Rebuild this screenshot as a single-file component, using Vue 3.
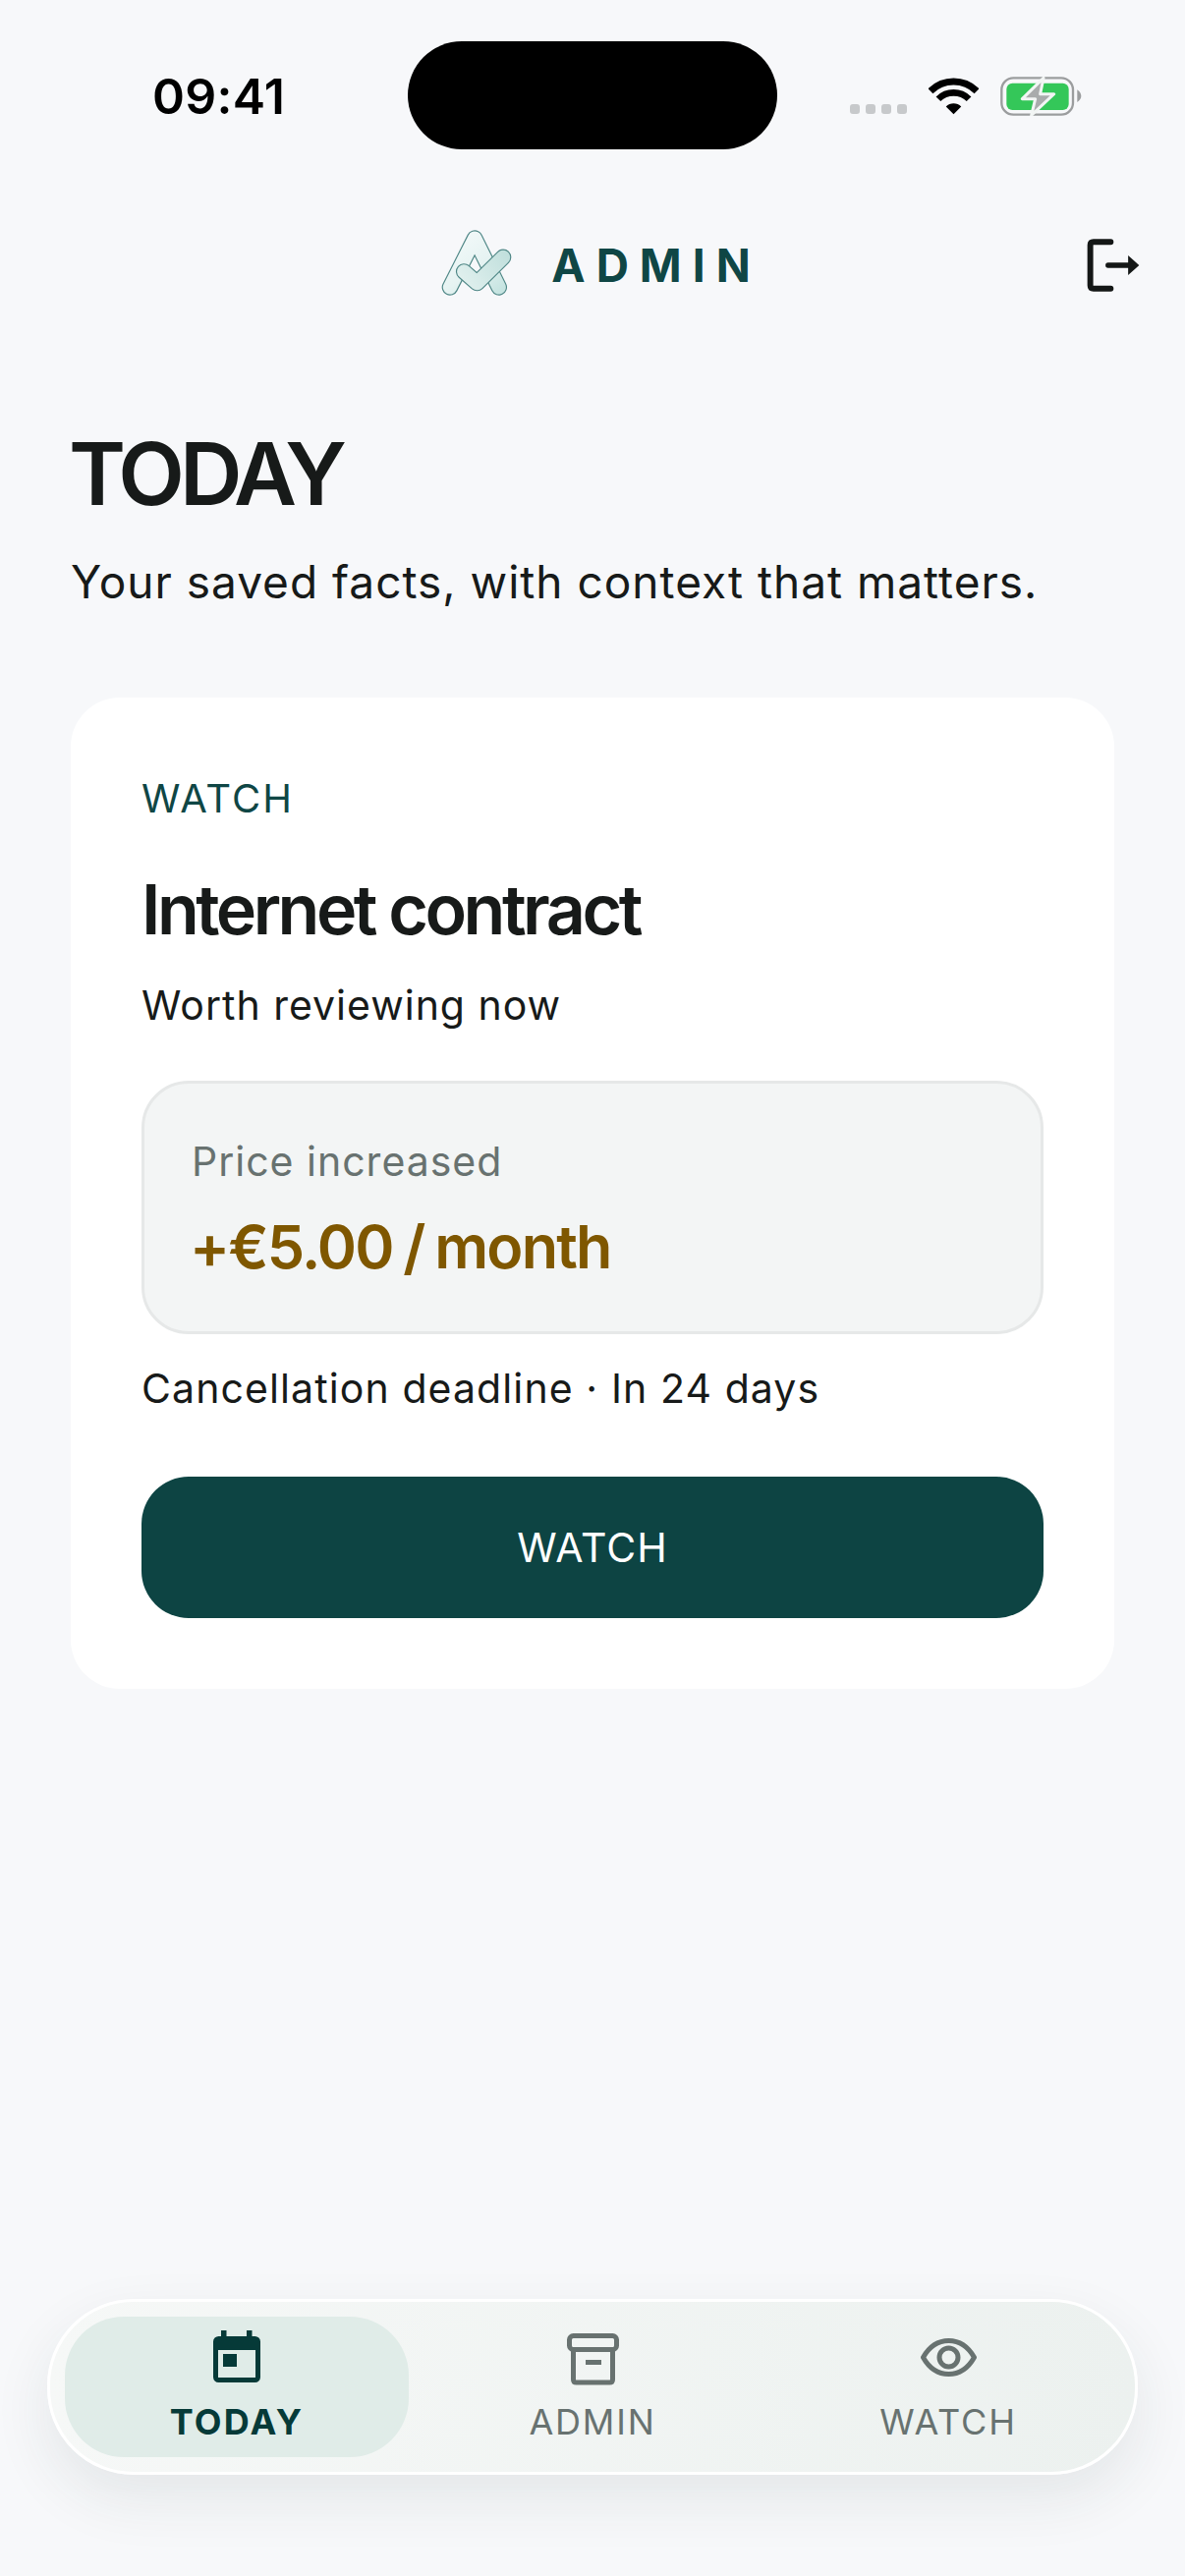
<template>
  <div class="screen">
    <div class="status-bar">
      <span class="time">09:41</span>
      <div class="island"></div>
      <div class="status-icons">
        <div class="signal"><i></i><i></i><i></i><i></i></div>
        <svg class="wifi" viewBox="316 86 152 114">
          <path d="M321.3 127.3A100 100 0 0 1 462.7 127.3" fill="none" stroke="#000" stroke-width="21" />
          <path d="M345.3 151.3A66 66 0 0 1 438.7 151.3" fill="none" stroke="#000" stroke-width="20" />
          <path d="M392 198L368.7 174.7A33 33 0 0 1 415.3 174.7Z" fill="#000" />
        </svg>
        <svg class="battery" viewBox="0 0 249 120">
          <rect x="4" y="4" width="218" height="112" rx="36" fill="none" stroke="#9b9d9e" stroke-width="7" />
          <rect x="19" y="20" width="190" height="82" rx="18" fill="#34c759" />
          <path d="M235 40C243 46 247 52 247 59S243 72 235 78Z" fill="#9b9d9e" />
          <path d="M132 4L67 68H107L95 118L164 53H122Z" fill="#a9abac" stroke="#f2f5f4" stroke-width="9" stroke-linejoin="round" />
        </svg>
      </div>
    </div>

    <header class="top-bar">
      <span></span>
      <div class="brand">
        <svg class="brand-mark" viewBox="50 50 230 220">
          <defs>
            <linearGradient id="markA" gradientUnits="userSpaceOnUse" x1="90" y1="70" x2="230" y2="250">
              <stop offset="0" stop-color="#f4fafa" />
              <stop offset="0.55" stop-color="#e6f3f2" />
              <stop offset="1" stop-color="#c6e4e1" />
            </linearGradient>
            <linearGradient id="markCheck" gradientUnits="userSpaceOnUse" x1="120" y1="220" x2="250" y2="130">
              <stop offset="0" stop-color="#e0f0ee" />
              <stop offset="1" stop-color="#c2e0dd" />
            </linearGradient>
          </defs>
          <path d="M82 235L158 85L232 235" fill="none" stroke="#4f8786" stroke-width="50" stroke-linecap="round" stroke-linejoin="round" />
          <path d="M82 235L158 85L232 235" fill="none" stroke="url(#markA)" stroke-width="43" stroke-linecap="round" stroke-linejoin="round" />
          <path d="M125 187L165 222L245 143" fill="none" stroke="#4f8786" stroke-width="50" stroke-linecap="round" stroke-linejoin="round" />
          <path d="M125 187L165 222L245 143" fill="none" stroke="url(#markCheck)" stroke-width="43" stroke-linecap="round" stroke-linejoin="round" />
        </svg>
        <span class="brand-name">ADMIN</span>
      </div>
      <button class="logout" type="button" aria-label="Log out">
        <svg viewBox="800 578 162 164">
          <path d="M873 588H820Q810 588 810 598V722Q810 732 820 732H873" fill="none" stroke="#141716" stroke-width="18" stroke-linecap="round" />
          <path d="M865 660H935" fill="none" stroke="#141716" stroke-width="16" stroke-linecap="round" />
          <path d="M927 630L961 660L927 690Z" fill="#141716" />
        </svg>
      </button>
    </header>

    <main class="content">
      <h1 class="page-title">TODAY</h1>
      <p class="page-sub">Your saved facts, with context that matters.</p>

      <section class="card">
        <div class="card-tag">WATCH</div>
        <h2 class="card-title">Internet contract</h2>
        <p class="card-note">Worth reviewing now</p>
        <div class="change-box">
          <div class="change-label">Price increased</div>
          <div class="change-value">+€5.00 / month</div>
        </div>
        <p class="card-deadline">Cancellation deadline · In 24 days</p>
        <button class="card-action" type="button">WATCH</button>
      </section>
    </main>

    <nav class="tab-bar">
      <div class="tab active">
        <svg class="tab-icon" width="48" height="56" viewBox="0 0 48 56">
          <rect x="8" y="0" width="5.5" height="8" fill="#063a38" />
          <rect x="34" y="0" width="5.5" height="8" fill="#063a38" />
          <rect x="2.5" y="8.5" width="43" height="42" rx="3" fill="none" stroke="#063a38" stroke-width="5" />
          <rect x="2" y="7" width="44" height="13" rx="2" fill="#063a38" />
          <rect x="10" y="24" width="14" height="13" fill="#063a38" />
        </svg>
        <span>TODAY</span>
      </div>
      <div class="tab">
        <svg class="tab-icon" width="53" height="56" viewBox="0 -3 53 56">
          <rect x="2.5" y="2.5" width="48" height="14" rx="4" fill="none" stroke="#687270" stroke-width="5" />
          <path d="M6.5 17V47Q6.5 50 9.5 50H43.5Q46.5 50 46.5 47V17" fill="none" stroke="#687270" stroke-width="5" />
          <rect x="19" y="27" width="16" height="5" fill="#687270" />
        </svg>
        <span>ADMIN</span>
      </div>
      <div class="tab">
        <svg class="tab-icon" width="57" height="56" viewBox="0 -8 57 56">
          <path d="M2.5 19.5C9 8 18 2.5 28.5 2.5S48 8 54.5 19.5C48 31 39 36.5 28.5 36.5S9 31 2.5 19.5Z" fill="none" stroke="#687270" stroke-width="5" stroke-linejoin="round" />
          <circle cx="28.5" cy="19.5" r="9.5" fill="none" stroke="#687270" stroke-width="5" />
        </svg>
        <span>WATCH</span>
      </div>
    </nav>
  </div>
</template>

<script setup>
</script>

<style>
html,
body {
  background: #f7f8fa;
}
</style>

<style scoped>
.screen {
  display: flex;
  flex-direction: column;
  width: 1206px;
  height: 2622px;
  background: #f7f8fa;
  font-family: Inter, "Liberation Sans", sans-serif;
  color: #171a19;
  overflow: hidden;
}

.status-bar {
  display: flex;
  align-items: flex-start;
  height: 152px;
  padding: 42px 0 0 155px;
  box-sizing: border-box;
}

.time {
  width: 260px;
  margin-top: 28px;
  font-size: 50px;
  line-height: 56px;
  font-weight: 600;
  letter-spacing: 0.3px;
  color: #000;
}

.island {
  width: 376px;
  height: 110px;
  border-radius: 55px;
  background: #000;
}

.status-icons {
  display: flex;
  align-items: flex-start;
  margin-left: 74px;
}

.signal {
  display: flex;
  gap: 6px;
  margin-top: 64px;
}

.signal i {
  width: 10px;
  height: 10px;
  border-radius: 3px;
  background: #c7c9cb;
}

.wifi {
  width: 51px;
  height: 38px;
  margin: 37px 0 0 22px;
}

.battery {
  width: 83px;
  height: 40px;
  margin: 36px 0 0 22px;
}

.top-bar {
  display: grid;
  grid-template-columns: 1fr auto 1fr;
  align-items: center;
  height: 84px;
  margin-top: 76px;
  padding: 0 46px 0 62px;
}

.brand {
  display: flex;
  align-items: center;
  gap: 37px;
}

.brand-mark {
  width: 77px;
  height: 73px;
  margin-top: -5px;
}

.brand-name {
  font-size: 46px;
  line-height: 50px;
  font-weight: 700;
  letter-spacing: 11px;
  color: #0f4645;
}

.logout {
  justify-self: end;
  width: 54px;
  height: 54px;
  padding: 0;
  border: 0;
  background: none;
}

.logout svg {
  display: block;
  width: 54px;
  height: 54px;
}

.content {
  padding: 0 72px;
}

.page-title {
  margin: 0 0 0 -2px;
  padding-top: 117px;
  font-size: 88px;
  line-height: 106px;
  font-weight: 600;
  letter-spacing: -5px;
  color: #171a19;
}

.page-sub {
  margin: 29px 0 0;
  font-size: 46px;
  line-height: 56px;
  letter-spacing: 1px;
}

.card {
  margin-top: 90px;
  height: 1009px;
  padding: 79px 72px 0;
  box-sizing: border-box;
  border-radius: 50px;
  background: #fff;
}

.card-tag {
  font-size: 40px;
  line-height: 48px;
  letter-spacing: 2px;
  color: #0f4645;
}

.card-title {
  margin: 47px 0 0;
  font-size: 70px;
  line-height: 84px;
  font-weight: 600;
  letter-spacing: -3.5px;
}

.card-note {
  margin: 30px 0 0;
  font-size: 41px;
  line-height: 50px;
  letter-spacing: 1px;
}

.change-box {
  height: 258px;
  margin-top: 52px;
  padding: 54px 48px 0;
  box-sizing: border-box;
  border: 3px solid #e6e8e8;
  border-radius: 48px;
  background: #f3f5f5;
}

.change-label {
  font-size: 41px;
  line-height: 50px;
  letter-spacing: 1px;
  color: #687270;
}

.change-value {
  margin: 26px 0 0 -2px;
  font-size: 61px;
  line-height: 72px;
  font-weight: 600;
  letter-spacing: -1.8px;
  word-spacing: -3px;
  color: #7f5700;
}

.card-deadline {
  margin: 30px 0 0;
  font-size: 41px;
  line-height: 50px;
  letter-spacing: 1.1px;
}

.card-action {
  display: block;
  width: 100%;
  height: 144px;
  margin-top: 65px;
  border: 0;
  border-radius: 48px;
  background: #0d4443;
  color: #fff;
  font-family: inherit;
  font-size: 41px;
  letter-spacing: 1px;
}

.tab-bar {
  display: flex;
  gap: 12px;
  height: 179px;
  margin: auto 48px 103px;
  padding: 15px;
  box-sizing: border-box;
  border: 3px solid #fff;
  border-radius: 88px;
  background: linear-gradient(90deg, #f6f8f7, #ecf1ef);
  box-shadow: 0 24px 60px rgba(30, 50, 50, 0.09);
}

.tab {
  flex: 1;
  display: flex;
  flex-direction: column;
  align-items: center;
  padding-top: 14px;
  border-radius: 60px;
  font-size: 36px;
  line-height: 44px;
  letter-spacing: 1.8px;
  color: #687270;
}

.tab span {
  margin-top: 15px;
}

.tab.active {
  background: #e0ece8;
  color: #063a38;
  font-weight: 700;
  letter-spacing: 2.2px;
}

.tab-icon {
  display: block;
}
</style>
